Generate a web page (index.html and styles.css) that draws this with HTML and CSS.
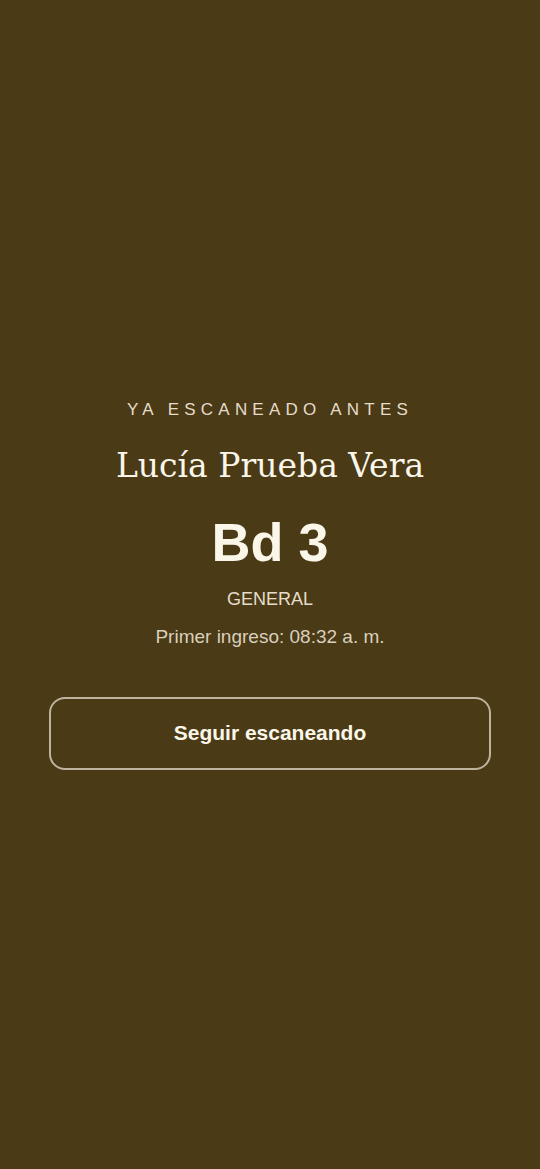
FILE: index.html
```html
<!DOCTYPE html>
<html lang="es">

<head>
    <meta charset="UTF-8">
    <meta name="viewport" content="width=device-width, initial-scale=1.0">
    <title>Escaneo</title>
    <link rel="stylesheet" href="styles.css">
</head>

<body>
    <main class="pantalla">
        <p class="aviso">YA ESCANEADO ANTES</p>
        <h1 class="nombre">Lucía Prueba Vera</h1>
        <div class="asiento">Bd 3</div>
        <p class="tipo">GENERAL</p>
        <p class="ingreso">Primer ingreso: 08:32 a. m.</p>
        <button class="seguir">Seguir escaneando</button>
    </main>
</body>

</html>
```

FILE: styles.css
```css
html,
body {
    margin: 0;
    height: 100%;
}

body {
    background-color: #4a3a15;
    color: #fbf6ea;
    font-family: "Liberation Sans", Arial, sans-serif;
}

.pantalla {
    height: 100%;
    display: flex;
    flex-direction: column;
    justify-content: center;
    align-items: center;
    padding: 0 49px;
    box-sizing: border-box;
    text-align: center;
}

.aviso {
    margin: 0;
    font-size: 17px;
    letter-spacing: 5.2px;
    color: #e6dccb;
}

.nombre {
    margin: 24px 0 0;
    font-family: "DejaVu Serif", Georgia, serif;
    font-weight: normal;
    font-size: 33px;
    line-height: 44px;
}

.asiento {
    margin-top: 22px;
    font-size: 54px;
    font-weight: bold;
    line-height: 64px;
}

.tipo {
    margin: 15px 0 0;
    font-size: 18px;
    color: #e6dccb;
}

.ingreso {
    margin: 16px 0 0;
    font-size: 19px;
    color: #d9cfbd;
}

.seguir {
    margin-top: 49px;
    width: 100%;
    height: 73px;
    background: transparent;
    border: 2px solid #bdb39e;
    border-radius: 16px;
    color: #fbf6ea;
    font-family: "Liberation Sans", Arial, sans-serif;
    font-size: 21px;
    font-weight: bold;
}
```
